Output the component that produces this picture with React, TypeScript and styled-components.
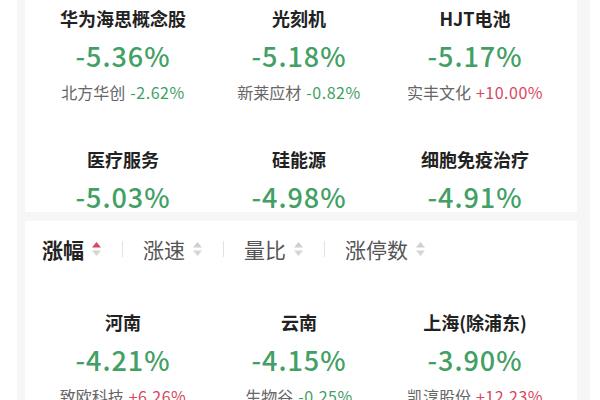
import React from 'react';
import styled, { createGlobalStyle } from 'styled-components';

interface Sector {
  name: string;
  change: string;
  leader?: string;
  leaderChange?: string;
}

const GlobalStyle = createGlobalStyle`
  html, body {
    margin: 0;
    padding: 0;
    background: #ffffff;
    font-family: "Noto Sans CJK SC", "Noto Sans", sans-serif;
  }
`;

const Page = styled.div`
  width: 600px;
  height: 400px;
  overflow: hidden;
  padding: 0 10px 0 17px;
  box-sizing: border-box;
  background: #ffffff;
`;

const Frame = styled.div`
  height: 100%;
  background: #f6f6f6;
  padding: 0 13px 0 8px;
  display: flex;
  flex-direction: column;
  gap: 9px;
`;

const Card = styled.div`
  background: #ffffff;
  flex-shrink: 0;
`;

const Grid = styled.div<{ $top: number }>`
  display: grid;
  grid-template-columns: repeat(3, 176px);
  row-gap: 45px;
  padding: ${props => props.$top}px 0 0 10px;
`;

const Cell = styled.div`
  display: flex;
  flex-direction: column;
  align-items: center;
`;

const Title = styled.div`
  font-size: 18px;
  line-height: 24px;
  font-weight: 700;
  color: #222222;
  white-space: nowrap;
`;

const Change = styled.div`
  margin-top: 11px;
  font-size: 27px;
  line-height: 30px;
  font-weight: 500;
  letter-spacing: 1px;
  color: #42a064;
`;

const Leader = styled.div`
  margin-top: 11px;
  font-size: 16px;
  line-height: 20px;
  color: #666666;
  white-space: nowrap;
  display: flex;
  align-items: baseline;
  gap: 5px;
`;

const LeaderChange = styled.span<{ $up: boolean }>`
  font-size: 16px;
  letter-spacing: 0.5px;
  color: ${props => (props.$up ? '#d8475f' : '#42a064')};
`;

const Tabs = styled.div`
  display: flex;
  align-items: center;
  gap: 20px;
  padding: 16px 0 0 17px;
  height: 24px;
`;

const Tab = styled.div<{ $active?: boolean }>`
  display: flex;
  align-items: center;
  gap: 7px;
  font-size: 21px;
  line-height: 24px;
  font-weight: ${props => (props.$active ? 700 : 400)};
  color: ${props => (props.$active ? '#222222' : '#555555')};
`;

const Divider = styled.span`
  width: 1px;
  height: 16px;
  background: #e2e2e2;
`;

const SortIcon = ({ active }: { active?: boolean }) => (
  <svg width="11" height="16" viewBox="0 0 11 16">
    <path d="M5.5 1 L10 6.5 L1 6.5 Z" fill={active ? '#d8475f' : '#cfcfcf'} />
    <path d="M5.5 15 L10 9.5 L1 9.5 Z" fill="#d6d6d6" />
  </svg>
);

const topSectors: Sector[] = [
  { name: '华为海思概念股', change: '-5.36%', leader: '北方华创', leaderChange: '-2.62%' },
  { name: '光刻机', change: '-5.18%', leader: '新莱应材', leaderChange: '-0.82%' },
  { name: 'HJT电池', change: '-5.17%', leader: '实丰文化', leaderChange: '+10.00%' },
  { name: '医疗服务', change: '-5.03%' },
  { name: '硅能源', change: '-4.98%' },
  { name: '细胞免疫治疗', change: '-4.91%' },
];

const regions: Sector[] = [
  { name: '河南', change: '-4.21%', leader: '致欧科技', leaderChange: '+6.26%' },
  { name: '云南', change: '-4.15%', leader: '生物谷', leaderChange: '-0.25%' },
  { name: '上海(除浦东)', change: '-3.90%', leader: '凯淳股份', leaderChange: '+12.23%' },
];

const tabs = ['涨幅', '涨速', '量比', '涨停数'];

function SectorCell({ item }: { item: Sector }) {
  return (
    <Cell>
      <Title>{item.name}</Title>
      <Change>{item.change}</Change>
      {item.leader && (
        <Leader>
          {item.leader}
          <LeaderChange $up={item.leaderChange!.startsWith('+')}>{item.leaderChange}</LeaderChange>
        </Leader>
      )}
    </Cell>
  );
}

export default function App() {
  return (
    <Page>
      <GlobalStyle />
      <Frame>
        <Card>
          <Grid $top={6}>
            {topSectors.map((s, i) => (
              <SectorCell key={i} item={s} />
            ))}
          </Grid>
        </Card>
        <Card>
          <Tabs>
            {tabs.map((t, i) => (
              <React.Fragment key={t}>
                {i > 0 && <Divider />}
                <Tab $active={i === 0}>
                  {t}
                  <SortIcon active={i === 0} />
                </Tab>
              </React.Fragment>
            ))}
          </Tabs>
          <Grid $top={49}>
            {regions.map((s, i) => (
              <SectorCell key={i} item={s} />
            ))}
          </Grid>
        </Card>
      </Frame>
    </Page>
  );
}
